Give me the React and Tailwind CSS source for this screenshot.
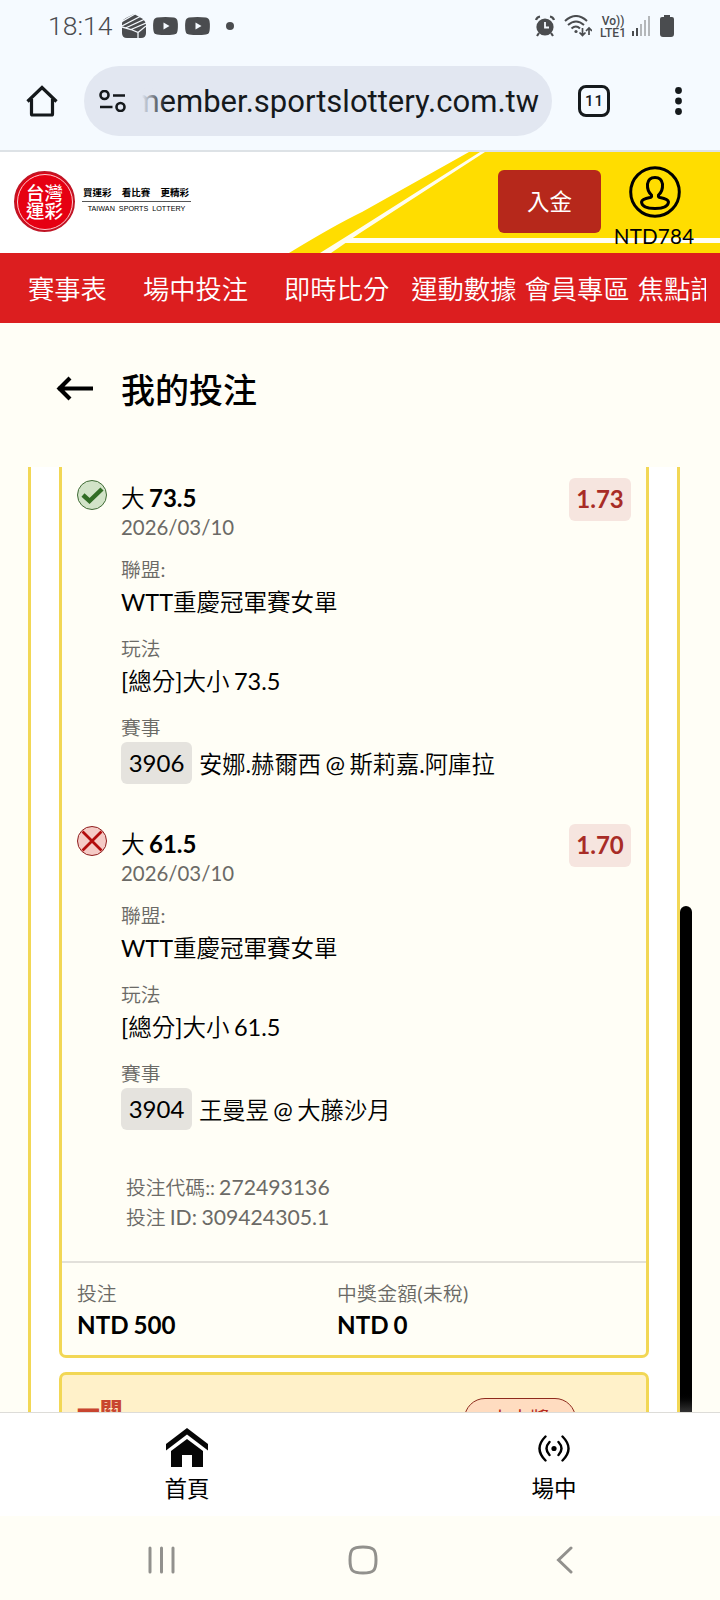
import React from 'react';
import { clsx } from 'clsx';

const menuItems = [
  { label: '賽事表', className: 'mr-9' },
  { label: '場中投注', className: 'mr-9' },
  { label: '即時比分', className: 'mr-[22px]' },
  { label: '運動數據', className: 'mr-2' },
  { label: '會員專區', className: 'mr-2' },
  { label: '焦點訊息', className: '' }
];

const bets = [
  {
    id: 1,
    won: true,
    line: '73.5',
    odds: '1.73',
    date: '2026/03/10',
    league: 'WTT重慶冠軍賽女單',
    market: '[總分]大小 73.5',
    code: '3906',
    event: '安娜.赫爾西 @ 斯莉嘉.阿庫拉'
  },
  {
    id: 2,
    won: false,
    line: '61.5',
    odds: '1.70',
    date: '2026/03/10',
    league: 'WTT重慶冠軍賽女單',
    market: '[總分]大小 61.5',
    code: '3904',
    event: '王曼昱 @ 大藤沙月'
  }
];

const StatusBar = () => (
  <div className="flex h-[52px] shrink-0 items-center pl-12 pr-[46px] font-['Roboto'] text-[#4a4c4f]">
    <span className="w-[65px] text-[26.5px] font-light leading-none">18:14</span>
    <svg className="ml-[9px] h-6 w-6" viewBox="0 0 24 24">
      <path d="M12 0 L21 5 Q24 8 24 11 V19 Q24 24 19 24 H5 Q0 24 0 19 V10 Q0 6 4 4Z" fill="currentColor" />
      <path d="M0 7.500 L13 0 M0 12 L20 1.500 M3.500 14 L24 4.500 M9 15.500 L24 9 M0 13 L9 15.500 L16 18.500 V24 M16 18.500 L24 12" fill="none" stroke="#f5faff" strokeWidth="1.300" />
    </svg>
    <YoutubeIcon className="ml-[7px]" />
    <YoutubeIcon className="ml-[7px]" />
    <span className="ml-4 h-2 w-2 rounded-full bg-[#4a4c4f]" />
    {/* Alarm */}
    <svg className="ml-auto h-[22px] w-5" viewBox="0 0 20 22">
      <circle cx="10" cy="12" r="8.600" fill="currentColor" />
      <path d="M1 5 Q2 2 5 1.500 M19 5 Q18 2 15 1.500 M4 18 L2 21 M16 18 L18 21" fill="none" stroke="currentColor" strokeWidth="2.200" />
      <path d="M10 7 V12.500 H14" fill="none" stroke="#f5faff" strokeWidth="1.800" />
    </svg>
    {/* Wifi */}
    <svg className="ml-[9px] h-[22px] w-7" viewBox="0 0 28 22" fill="none" stroke="currentColor" strokeWidth="2">
      <path d="M1 6 Q12 -4 23 6 M4 10 Q12 3 20 10 M7.500 13.500 Q12 9.500 16 13.500" />
      <circle cx="12" cy="16.500" r="1.600" fill="currentColor" stroke="none" />
      <path d="M18.500 13 V20 M15.500 17.500 L18.500 20.500 L21.500 17.500 M25 20 V13 M22 16 L25 13 L28 16" strokeWidth="1.700" />
    </svg>
    <div className="ml-[7px] flex w-7 flex-col items-center whitespace-nowrap pt-[2px] text-[12px] font-medium leading-3">
      <span>Vo))</span>
      <span>LTE1</span>
    </div>
    <svg className="ml-[5px] h-5 w-[18px]" viewBox="0 0 18 20" fill="currentColor">
      <path d="M0 15h2v5H0z M4 12h2v8H4z" />
      <path d="M8 8h2v12H8z M12 4h2v16h-2z M16 0h2v20h-2z" fill="#b4b7ba" />
    </svg>
    <svg className="ml-[10px] h-[22px] w-[14px]" viewBox="0 0 14 22" fill="currentColor">
      <path d="M4 0h6v2h2q2 0 2 2v15q0 3-3 3H3q-3 0-3-3V4q0-2 2-2h2z" />
    </svg>
  </div>
);

const YoutubeIcon = ({ className }) => (
  <svg className={clsx('h-[18px] w-[25px]', className)} viewBox="0 0 25 18">
    <path d="M4 .5 Q12.500 -.5 21 .5 Q24 1 24.500 4 Q25.300 9 24.500 14 Q24 17 21 17.500 Q12.500 18.500 4 17.500 Q1 17 .5 14 Q-.3 9 .5 4 Q1 1 4 .5Z" fill="currentColor" />
    <path d="M10.500 5.500 L16.500 9 L10.500 12.500Z" fill="#f5faff" />
  </svg>
);

const AddressBar = () => (
  <div className="flex h-[97px] shrink-0 items-center pl-[26px] pr-[38px] text-[#15191c]">
    <svg className="h-8 w-8" viewBox="0 0 32 32" fill="none" stroke="currentColor" strokeWidth="3.200">
      <path d="M1.500 16.500 L16 2.500 L30.500 16.500 M5.500 14 V29 Q5.500 30 6.500 30 H25.500 Q26.500 30 26.500 29 V14" />
    </svg>
    <div className="ml-[26px] flex h-[70px] w-[468px] items-center rounded-full bg-[#e2e7f1] pl-[15px] pr-[13px]">
      <svg className="h-[22px] w-[27px] shrink-0" viewBox="0 0 27 22" fill="none" stroke="currentColor" strokeWidth="2.600">
        <circle cx="5.500" cy="5" r="4" />
        <circle cx="21.500" cy="17" r="4" />
        <path d="M14 5.500 H26 M1 17 H13.500" />
      </svg>
      <div className="relative ml-[16px] flex h-12 w-[397px] items-center justify-end overflow-hidden pt-[2px]">
        <span className="whitespace-nowrap font-['Roboto'] text-[31px] leading-none">member.sportslottery.com.tw</span>
        <div className="absolute inset-y-0 left-0 w-6 bg-linear-to-r from-[#e2e7f1] to-transparent" />
      </div>
    </div>
    <div className="ml-[26px] flex h-8 w-8 items-center justify-center rounded-[8px] border-3 border-[#15191c] pl-px pt-[2px] font-['Roboto'] text-[15px] font-medium tracking-[1px]">
      11
    </div>
    <svg className="ml-auto mt-px h-7 w-[7px]" viewBox="0 0 7 28" fill="currentColor">
      <circle cx="3.500" cy="3.500" r="3.400" />
      <circle cx="3.500" cy="14" r="3.400" />
      <circle cx="3.500" cy="24.500" r="3.400" />
    </svg>
  </div>
);

const SiteHeader = () => (
  <header className="relative flex h-[103px] shrink-0 border-t-2 border-[#dde2e6] bg-white">
    <svg className="absolute left-0 top-0 h-[101px] w-[720px]" viewBox="0 0 720 101">
      <path d="M289 101 Q335 73 362 60 L469 0 H720 V101Z" fill="#ffdd00" />
      <path d="M320 101 L360 76 L480 0 H485 L360 81 L331 101Z" fill="#fffdf0" />
      <path d="M352 86 H720 V91 H342Z" fill="#fffef5" />
    </svg>
    <div className="relative flex w-full">
      <div className="ml-[14px] mt-[19px] flex h-[61px] w-[61px] items-center justify-center rounded-full border-2 border-[#c01525] bg-[#e60012]">
        <div className="flex h-[56px] w-[56px] shrink-0 items-center justify-center rounded-full border border-white/80">
          <div className="w-[37px] text-center text-[18.5px] font-medium leading-[18px] text-white">台灣運彩</div>
        </div>
      </div>
      <div className="ml-[7px] mt-[34px] w-[109px] text-center text-black">
        <div className="flex h-[16px] items-center justify-between border-b border-[#555] pb-px pl-px pr-[2px] text-[9.5px] font-bold leading-none">
          <span>買運彩</span>
          <span>看比賽</span>
          <span>更精彩</span>
        </div>
        <div className="whitespace-nowrap pt-[3px] font-['Liberation_Sans'] text-[7.2px] font-medium leading-[8px] [word-spacing:2px]">TAIWAN SPORTS LOTTERY</div>
      </div>
      <button className="ml-[307px] mt-[18px] h-[63px] w-[103px] rounded-[6px] bg-[#b6281b] pt-px text-[22.5px] text-white">入金</button>
      <div className="ml-[12px] mt-[14px] flex w-[82px] flex-col items-center">
        <svg className="ml-[2px] h-[52px] w-[52px]" viewBox="0 0 52 52" fill="none" stroke="black" strokeWidth="3">
          <circle cx="26" cy="26" r="24.300" />
          <path d="M22.500 29 Q18 25 18.500 18 Q19.500 11.500 26 11.500 Q32.500 11.500 33.500 18 Q34 25 29.500 29 Q29 31 31 31.500 Q39 33 39.500 36 Q39 42.500 26 42.500 Q13 42.500 12.500 36 Q13 33 21 31.500 Q23 31 22.500 29Z" />
        </svg>
        <span className="mt-[7px] text-[20.6px] leading-[22px] tracking-[0.2px] text-black">NTD784</span>
      </div>
    </div>
  </header>
);

const Label = ({ children, className }) => (
  <div className={clsx("h-[30px] font-['Lato','Noto_Sans_CJK_TC_DemiLight','Noto_Sans_CJK_TC_Light','Noto_Sans_CJK_TC',sans-serif] text-[19.8px] leading-[30px] text-[#6b6a66]", className)}>{children}</div>
);

const ResultIcon = ({ won }) => (
  <svg className="-mt-px h-[30px] w-[30px] shrink-0" viewBox="0 0 30 30" fill="none">
    <circle cx="15" cy="15" r="14.500" fill={won ? '#d2e3c8' : '#f5cbc6'} stroke={won ? '#3f6b35' : '#8e1d1d'} />
    {won ? (
      <path d="M6 15 L12.500 21 L25 9" stroke="#326d26" strokeWidth="4.500" />
    ) : (
      <path d="M5.500 5.500 L24.500 24.500 M24.500 5.500 L5.500 24.500" stroke="#b30c0c" strokeWidth="2.800" />
    )}
  </svg>
);

const BetItem = ({ bet }) => (
  <div className="flex h-[346px] pl-[15px] pr-[15px]">
    <ResultIcon won={bet.won} />
    <div className="ml-[14px] flex-1 font-['Lato','Noto_Sans_CJK_TC_DemiLight','Noto_Sans_CJK_TC',sans-serif] text-[23.5px] [word-spacing:-1.5px]">
      <div className="h-[31px] pt-px leading-[31px]">
        大 <span className="text-[24px] font-bold">{bet.line}</span>
      </div>
      <div className="h-8 text-[20.4px] leading-[30px] text-[#6b6a66]">{bet.date}</div>
      <Label className="mt-[10px]">聯盟:</Label>
      <div className="h-9 leading-9">{bet.league}</div>
      <Label className="mt-[13px]">玩法</Label>
      <div className="h-9 leading-9">{bet.market}</div>
      <Label className="mt-[13px]">賽事</Label>
      <div className="flex h-[42px] items-center whitespace-nowrap">
        <span className="mr-[7px] h-[42px] w-[71px] rounded-[6px] bg-[#e5e3de] text-center text-[24px] leading-[42px]">{bet.code}</span>
        <span className="pt-[3px] text-[23.3px]">{bet.event}</span>
      </div>
    </div>
    <div className="-mt-[3px] h-[43px] w-[62px] rounded-[6px] bg-[#f6e5df] text-center text-[24px] font-bold leading-[42px] text-[#a82c26]">
      {bet.odds}
    </div>
  </div>
);

const BottomNav = () => (
  <nav className="flex h-[104px] shrink-0 border-t border-[#dddcd8] bg-white text-[22.5px] text-black">
    <div className="flex w-[374px] shrink-0 flex-col items-center pt-[15px]">
      <svg className="h-[39px] w-[42px]" viewBox="0 0 42 39" fill="#060606">
        <path d="M21 0 L42 16 V22.500 L21 6.500 L0 22.500 V16Z" />
        <path d="M21 11 L37 23 V39 H26 V27 H16 V39 H5 V23Z" />
      </svg>
      <span className="mt-[6px] leading-8">首頁</span>
    </div>
    <div className="flex w-[360px] shrink-0 flex-col items-center pt-[22px]">
      <svg className="h-[27px] w-8" viewBox="0 0 32 27" fill="none" stroke="black" strokeWidth="2.400" strokeLinecap="round">
        <circle cx="16" cy="13.500" r="2.600" fill="black" stroke="none" />
        <path d="M11.500 7 Q5.500 13.500 11.500 20 M20.500 7 Q26.500 13.500 20.500 20 M7.500 1.500 Q-4.500 13.500 7.500 25.500 M24.500 1.500 Q36.500 13.500 24.500 25.500" />
      </svg>
      <span className="mt-[11px] leading-8">場中</span>
    </div>
  </nav>
);

const SystemNav = () => (
  <div className="flex flex-1 items-center pl-[148px] pt-[3px] text-[#92918d]">
    <svg className="h-7 w-[27px]" viewBox="0 0 27 28" fill="none" stroke="currentColor" strokeWidth="3" strokeLinecap="round">
      <path d="M2 2 V26 M13.500 2 V26 M25 2 V26" />
    </svg>
    <svg className="ml-[173px] h-[30px] w-[30px]" viewBox="0 0 30 30" fill="none" stroke="currentColor" strokeWidth="3">
      <path d="M15 2 Q23 2 25.500 4.500 Q28 7 28 15 Q28 23 25.500 25.500 Q23 28 15 28 Q7 28 4.500 25.500 Q2 23 2 15 Q2 7 4.500 4.500 Q7 2 15 2Z" />
    </svg>
    <svg className="ml-[178px] h-7 w-[17px]" viewBox="0 0 17 28" fill="none" stroke="currentColor" strokeWidth="3" strokeLinecap="round">
      <path d="M15 2 L2.500 14 L15 26" />
    </svg>
  </div>
);

const App = () => {
  return (
    <div className="flex h-[1600px] w-[720px] flex-col overflow-hidden bg-[#fffef6] font-['Lato','Noto_Sans_CJK_TC',sans-serif] text-black">
      {/* Browser chrome */}
      <div className="flex h-[150px] flex-col bg-[#f5faff]">
        <StatusBar />
        <AddressBar />
      </div>

      <SiteHeader />

      {/* Main menu */}
      <div className="h-[70px] shrink-0 bg-[#dc1e1f] pl-7 pr-[14px]">
        <div className="flex h-full items-center overflow-hidden whitespace-nowrap font-['Noto_Sans_CJK_TC_DemiLight','Noto_Sans_CJK_TC',sans-serif] text-[26.3px] text-white">
          {menuItems.map((item) => (
            <span key={item.label} className={clsx('shrink-0', item.className)}>{item.label}</span>
          ))}
        </div>
      </div>

      {/* Page title */}
      <div className="flex h-[144px] shrink-0 items-start pl-14 pt-[42px]">
        <svg className="mt-[11px] h-[25px] w-[37px]" viewBox="0 0 37 25" fill="none" stroke="black" strokeWidth="4.200">
          <path d="M14 2 L3.500 12.500 L14 23 M2 12.500 H37" />
        </svg>
        <h1 className="ml-7 text-[34px] font-medium leading-[50px]">我的投注</h1>
      </div>

      {/* Bet slips */}
      <div className="relative h-[945px] shrink-0 overflow-hidden pl-7">
        <div className="h-[1100px] w-[652px] border-x-3 border-[#f2d755] bg-white px-7">
          <div className="rounded-b-[7px] border-3 border-t-0 border-[#f2d755] bg-[#fffef6] pt-[14px]">
            {bets.map((bet) => (
              <BetItem key={bet.id} bet={bet} />
            ))}
            <div className="pb-[28px] pl-16 [word-spacing:-1px]">
              <Label className="-mt-px">投注代碼:: <span className="text-[21.2px]">272493136</span></Label>
              <Label className="mb-px">投注 <span className="text-[21.2px]">ID: 309424305.1</span></Label>
            </div>
            <div className="grid h-[94px] grid-cols-[260px_1fr] border-t-2 border-[#e2e0da] px-[15px] pt-[15px] [word-spacing:-1px]">
              <div>
                <Label>投注</Label>
                <div className="text-[24.2px] font-bold leading-[33px]">NTD 500</div>
              </div>
              <div>
                <Label className="tracking-[0.3px]">中獎金額(未稅)</Label>
                <div className="text-[24.2px] font-bold leading-[33px]">NTD 0</div>
              </div>
            </div>
          </div>
          <div className="mt-[14px] flex h-[160px] items-start rounded-t-[7px] border-3 border-[#f2d755] bg-[#fff1c9] pl-[15px] pt-[18px]">
            <span className="w-[387px] text-[22.8px] font-black leading-[34px] text-[#c8452f]">一關</span>
            <span className="mt-[5px] h-[42px] w-[112px] rounded-full border border-[#8e2a1d] bg-[#ffdcc0] text-center text-[20px] leading-[40px] text-[#b5281c]">未中獎</span>
          </div>
        </div>
        <div className="absolute bottom-0 left-[680px] h-[506px] w-3 rounded-t-full bg-linear-to-b from-black from-96% to-[#333]" />
      </div>

      <BottomNav />
      <SystemNav />
    </div>
  );
};

export default App;
